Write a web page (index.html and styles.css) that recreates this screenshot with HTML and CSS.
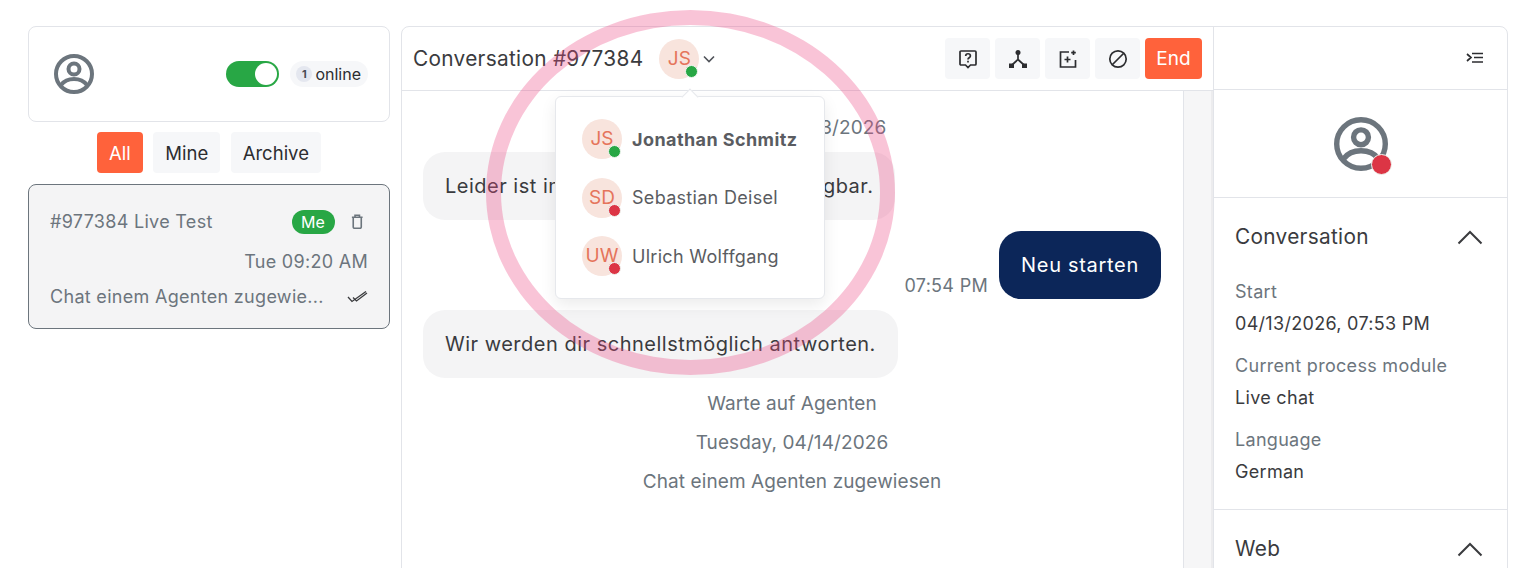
FILE: index.html
```html
<!doctype html>
<html lang="en">

<head>
    <title>Conversation #977384</title>
    <meta charset="UTF-8" />
    <meta name="viewport" content="width=device-width, initial-scale=1" />
    <link rel="stylesheet" href="styles.css">
</head>

<body>
    <div class="page">
        <div class="sidebar">
            <div class="status-card">
                <svg class="user-icon" viewBox="0 0 40 40" width="40" height="40">
                    <circle cx="20" cy="20" r="18" />
                    <circle cx="20" cy="15" r="5.5" />
                    <path d="M7 31c3-4 8-6 13-6s10 2 13 6" />
                </svg>
                <div class="toggle"><span></span></div>
                <div class="online"><b>1</b>online</div>
            </div>
            <div class="tabs">
                <button class="tab active">All</button>
                <button class="tab">Mine</button>
                <button class="tab">Archive</button>
            </div>
            <div class="chat-item">
                <div class="item-row">
                    <span class="item-title">#977384 Live Test</span>
                    <span class="me">Me</span>
                    <svg class="trash" viewBox="0 0 14 17" width="12.5" height="15.5">
                        <path d="M1 3.5h12M4.5 3.5V1.2h5v2.3M2.5 3.5v11a1.300 1.300 0 0 0 1.300 1.300h6.400a1.300 1.300 0 0 0 1.300-1.300v-11" />
                    </svg>
                </div>
                <div class="item-time">Tue 09:20 AM</div>
                <div class="item-row">
                    <span class="item-last">Chat einem Agenten zugewie...</span>
                    <svg class="ticks" viewBox="0 0 21 12" width="21" height="12">
                        <path d="M1 6l4 4.500L19 .5M6 6.500l3.500 3.500L20 2" />
                    </svg>
                </div>
            </div>
        </div>

        <div class="panel">
            <div class="conversation">
                <div class="conv-head">
                    <h1>Conversation #977384</h1>
                    <div class="avatar">JS<i class="dot green"></i></div>
                    <svg class="caret" viewBox="0 0 12 8" width="12" height="8">
                        <path d="M1 1.5l5 5 5-5" />
                    </svg>
                    <div class="actions">
                        <button class="icon-btn">
                            <svg viewBox="0 0 20 20" width="20" height="20">
                                <path d="M3 2h14a1 1 0 0 1 1 1v12a1 1 0 0 1-1 1h-4.500L10 18.500 7.500 16H3a1 1 0 0 1-1-1V3a1 1 0 0 1 1-1z" />
                                <path d="M7.700 7c0-3 4.700-3 4.700 0 0 1.800-2.400 1.700-2.400 3.400" />
                                <path d="M10 11.700v1.800" />
                            </svg>
                        </button>
                        <button class="icon-btn">
                            <svg viewBox="0 0 20 20" width="20" height="20">
                                <circle class="solid" cx="10" cy="3.500" r="2.500" />
                                <rect class="solid" x="1" y="14.500" width="5" height="4.500" />
                                <rect class="solid" x="14" y="14.500" width="5" height="4.500" />
                                <path d="M10 5v5.500L4 16M10 10.500l6 5.500" />
                            </svg>
                        </button>
                        <button class="icon-btn">
                            <svg viewBox="0 0 20 20" width="20" height="20">
                                <path d="M11 3H2.500v15h15v-7" />
                                <path d="M9.500 7.500v6M6.500 10.500h6" />
                                <path d="M15.500 1.500v4.500M13.200 3.700h4.600" />
                            </svg>
                        </button>
                        <button class="icon-btn">
                            <svg viewBox="0 0 20 20" width="20" height="20">
                                <circle cx="10" cy="10" r="8.200" />
                                <path d="M4.500 15.500l11-11" />
                            </svg>
                        </button>
                        <button class="end-btn">End</button>
                    </div>
                </div>

                <div class="conv-body">
                    <div class="messages">
                        <div class="note first">Monday, 04/13/2026</div>
                        <div class="bubble">Leider ist im Moment kein Agent verfügbar.</div>
                        <div class="out-row">
                            <span class="time">07:54 PM</span>
                            <div class="bubble out">Neu starten</div>
                        </div>
                        <div class="bubble">Wir werden dir schnellstmöglich antworten.</div>
                        <div class="note">Warte auf Agenten</div>
                        <div class="note">Tuesday, 04/14/2026</div>
                        <div class="note">Chat einem Agenten zugewiesen</div>
                    </div>
                    <div class="track"></div>
                </div>

                <div class="agents">
                    <div class="agent">
                        <div class="avatar">JS<i class="dot green"></i></div>
                        <strong>Jonathan Schmitz</strong>
                    </div>
                    <div class="agent">
                        <div class="avatar">SD<i class="dot red"></i></div>
                        <span>Sebastian Deisel</span>
                    </div>
                    <div class="agent">
                        <div class="avatar">UW<i class="dot red"></i></div>
                        <span>Ulrich Wolffgang</span>
                    </div>
                </div>
            </div>

            <div class="details">
                <div class="details-head">
                    <svg class="indent" viewBox="0 0 17 12" width="17" height="12">
                        <path d="M1 2l4 3.500L1 9M6 1.500h11M8 5.500h9M6 10h11" />
                    </svg>
                </div>
                <div class="details-user">
                    <div class="user-wrap">
                        <svg class="user-icon" viewBox="0 0 40 40" width="54" height="54">
                            <circle cx="20" cy="20" r="18" />
                            <circle cx="20" cy="15" r="5.500" />
                            <path d="M7 31c3-4 8-6 13-6s10 2 13 6" />
                        </svg>
                        <i class="dot red big"></i>
                    </div>
                </div>
                <div class="section">
                    <div class="section-head">
                        <h2>Conversation</h2>
                        <svg class="up" viewBox="0 0 26 15" width="26" height="15"><path d="M1.500 13.500L13 2l11.500 11.500" /></svg>
                    </div>
                    <div class="label">Start</div>
                    <div class="value">04/13/2026, 07:53 PM</div>
                    <div class="label">Current process module</div>
                    <div class="value">Live chat</div>
                    <div class="label">Language</div>
                    <div class="value">German</div>
                </div>
                <div class="section">
                    <div class="section-head">
                        <h2>Web</h2>
                        <svg class="up" viewBox="0 0 26 15" width="26" height="15"><path d="M1.500 13.500L13 2l11.500 11.500" /></svg>
                    </div>
                </div>
            </div>
        </div>
    </div>
    <div class="ring"></div>
</body>

</html>
```

FILE: styles.css
```css
* {
    box-sizing: border-box;
}

html,
body {
    margin: 0;
    padding: 0;
    height: 568px;
    overflow: hidden;
    background: #fff;
    font-family: Inter, "Liberation Sans", sans-serif;
    letter-spacing: 0.3px;
    color: #3a3b3e;
}

button {
    font-family: inherit;
    border: none;
    cursor: pointer;
}

.page {
    display: flex;
    gap: 11px;
    padding: 26px 20px 0 28px;
    height: 568px;
}

/* left column */
.sidebar {
    width: 362px;
    flex-shrink: 0;
}

.status-card {
    display: flex;
    align-items: center;
    height: 96px;
    padding: 0 21px 0 25px;
    border: 1px solid #e2e4e9;
    border-radius: 8px;
}

.user-icon {
    fill: none;
    stroke: #6c757d;
    stroke-width: 4;
}

.toggle {
    width: 53px;
    height: 26px;
    margin-left: auto;
    padding: 2px;
    display: flex;
    justify-content: flex-end;
    background: #28a745;
    border-radius: 13px;
}

.toggle span {
    width: 22px;
    height: 22px;
    background: #fff;
    border-radius: 50%;
}

.online {
    display: flex;
    align-items: center;
    gap: 3px;
    height: 26px;
    margin-left: 11px;
    padding: 0 7px 0 6px;
    font-size: 16px;
    letter-spacing: 0;
    background: #f6f7f9;
    border-radius: 13px;
    color: #2c2d30;
}

.online b {
    width: 16px;
    height: 16px;
    font-size: 11px;
    line-height: 16px;
    text-align: center;
    background: #e4e7ef;
    border-radius: 50%;
    color: #4a4e55;
}

.tabs {
    display: flex;
    justify-content: center;
    gap: 10.5px;
    margin: 10px 0 11px;
}

.tab {
    height: 41px;
    padding: 0 12px;
    font-size: 18.5px;
    letter-spacing: 0;
    color: #2c2d30;
    background: #f6f7f9;
    border-radius: 4px;
}

.tab.active {
    color: #fff;
    background: #ff623b;
}

.chat-item {
    height: 145px;
    padding: 23px 21px 0;
    font-size: 18px;
    color: #6c757d;
    background: #f4f4f5;
    border: 1px solid #6c757d;
    border-radius: 8px;
}

.item-row {
    display: flex;
    align-items: center;
    height: 27px;
}

.item-title,
.item-last {
    flex: 1;
}

.me {
    width: 43px;
    height: 24px;
    margin-right: 16px;
    font-size: 16px;
    letter-spacing: 0;
    line-height: 24px;
    text-align: center;
    color: #fff;
    background: #28a745;
    border-radius: 12px;
}

.trash {
    margin-right: 5px;
    fill: none;
    stroke: #6c757d;
    stroke-width: 1.8;
}

.item-time {
    margin-top: 13px;
    margin-bottom: 8px;
    line-height: 27px;
    text-align: right;
}

.ticks {
    fill: none;
    stroke: #3a3b3e;
    stroke-width: 1.3;
}

/* main panel */
.panel {
    flex: 1;
    display: flex;
    height: 600px;
    border: 1px solid #e2e4e9;
    border-radius: 8px;
}

.conversation {
    position: relative;
    width: 812px;
    flex-shrink: 0;
    display: flex;
    flex-direction: column;
    border-right: 1px solid #e2e4e9;
}

.conv-head {
    display: flex;
    align-items: center;
    height: 64px;
    padding: 0 11px;
    border-bottom: 1px solid #e2e4e9;
}

h1 {
    margin: 0 16px 0 0;
    font-size: 20.8px;
    font-weight: 400;
}

.avatar {
    position: relative;
    width: 40px;
    height: 40px;
    flex-shrink: 0;
    font-size: 19px;
    letter-spacing: 0;
    line-height: 40px;
    text-align: center;
    color: #e5745b;
    background: #f8e4dd;
    border-radius: 50%;
}

.dot {
    position: absolute;
    right: 1px;
    bottom: 1px;
    width: 13px;
    height: 13px;
    border: 1px solid #f0f5f0;
    border-radius: 50%;
}

.dot.green {
    background: #28a745;
}

.dot.red {
    background: #dc3545;
}

.dot.big {
    right: -4px;
    bottom: -4px;
    width: 21px;
    height: 21px;
}

.caret {
    margin-left: 4px;
    fill: none;
    stroke: #50535a;
    stroke-width: 1.6;
}

.actions {
    display: flex;
    gap: 5px;
    margin-left: auto;
}

.icon-btn {
    display: flex;
    align-items: center;
    justify-content: center;
    width: 45px;
    height: 41px;
    padding: 0;
    background: #f6f7f9;
    border-radius: 4px;
}

.icon-btn svg {
    fill: none;
    stroke: #2c2d30;
    stroke-width: 1.7;
}

.icon-btn .solid {
    fill: #2c2d30;
    stroke: none;
}

.end-btn {
    width: 57px;
    height: 41px;
    padding: 0;
    font-size: 19px;
    letter-spacing: 0;
    color: #fff;
    background: #ff623b;
    border-radius: 4px;
}

.conv-body {
    flex: 1;
    display: flex;
}

.messages {
    flex: 1;
    padding: 0 22px 0 21px;
}

.track {
    width: 30px;
    background: #f6f6f7;
    border-left: 1px solid #e2e4e9;
    border-right: 2px solid #ececee;
}

.note {
    margin-top: 12px;
    font-size: 19px;
    letter-spacing: 0.1px;
    line-height: 27px;
    text-align: center;
    color: #6c757d;
}

.note.first {
    margin-top: 23px;
    margin-bottom: 11px;
}

.bubble {
    width: fit-content;
    height: 68px;
    padding: 0 22px;
    font-size: 20px;
    letter-spacing: 0.5px;
    line-height: 68px;
    background: #f4f4f5;
    border-radius: 22px;
}

.bubble.out {
    letter-spacing: 0.7px;
    color: #fff;
    background: #0c2659;
}

.out-row {
    display: flex;
    align-items: flex-end;
    justify-content: flex-end;
    gap: 11px;
    margin: 11px 0;
}

.time {
    font-size: 18px;
    line-height: 27px;
    color: #6c757d;
}

/* agents popover */
.agents {
    position: absolute;
    top: 69px;
    left: 153px;
    width: 270px;
    height: 203px;
    padding: 22px 0 0 26px;
    background: #fff;
    border: 1px solid #e6e8ec;
    border-radius: 6px;
    box-shadow: 0 6px 16px rgba(0, 0, 0, 0.08);
}

.agents::before {
    content: "";
    position: absolute;
    top: -6px;
    left: 128px;
    width: 11px;
    height: 11px;
    background: #fff;
    border-top: 1px solid #e6e8ec;
    border-left: 1px solid #e6e8ec;
    transform: rotate(45deg);
}

.agent {
    display: flex;
    align-items: center;
    gap: 10px;
    height: 40px;
    margin-bottom: 18.5px;
    font-size: 18px;
    color: #5a5c61;
}

.agent strong {
    font-weight: 700;
    letter-spacing: 0.42px;
}

/* right details */
.details {
    flex: 1;
}

.details-head {
    display: flex;
    align-items: center;
    justify-content: flex-end;
    height: 63px;
    padding-right: 24px;
    border-bottom: 1px solid #e2e4e9;
}

.indent {
    fill: none;
    stroke: #2c2d30;
    stroke-width: 1.7;
}

.details-user {
    display: flex;
    align-items: center;
    justify-content: center;
    height: 108px;
    border-bottom: 1px solid #e2e4e9;
}

.user-wrap {
    position: relative;
    width: 54px;
    height: 54px;
}

.section {
    padding: 23px 21px 0;
    height: 312px;
    border-bottom: 1px solid #e2e4e9;
}

.section-head {
    display: flex;
    align-items: center;
    justify-content: space-between;
    height: 32px;
    margin-bottom: 25px;
}

h2 {
    margin: 0 0 2px;
    font-size: 20.8px;
    font-weight: 400;
}

.up {
    margin-right: 3px;
    fill: none;
    stroke: #3a3b3e;
    stroke-width: 2;
}

.label {
    font-size: 18px;
    line-height: 27px;
    color: #6c757d;
}

.value {
    margin-top: 5px;
    margin-bottom: 15px;
    font-size: 18px;
    line-height: 27px;
}

/* highlight drawn over the screenshot */
.ring {
    position: absolute;
    top: 10px;
    left: 486px;
    width: 409px;
    height: 365px;
    border: 15px solid rgba(236, 72, 130, 0.32);
    border-radius: 50%;
    pointer-events: none;
}
```
